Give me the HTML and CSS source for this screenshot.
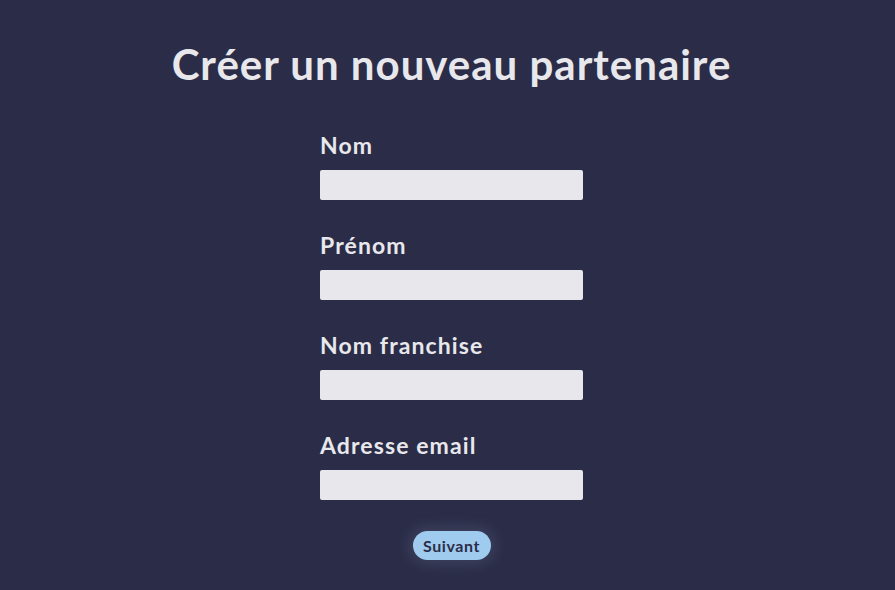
FILE: index.html
```html
<!DOCTYPE html>
<html lang="fr">
<head>
<meta charset="utf-8">
<link rel="stylesheet" href="styles.css">
<title>Créer un nouveau partenaire</title>
</head>
<body>
<main class="page">
  <h1 class="title">Créer un nouveau partenaire</h1>
  <form class="form">
    <label class="field">
      <span class="label">Nom</span>
      <input class="input" type="text">
    </label>
    <label class="field">
      <span class="label">Prénom</span>
      <input class="input" type="text">
    </label>
    <label class="field">
      <span class="label">Nom franchise</span>
      <input class="input" type="text">
    </label>
    <label class="field">
      <span class="label">Adresse email</span>
      <input class="input" type="email">
    </label>
    <div class="actions">
      <button class="btn" type="button">Suivant</button>
    </div>
  </form>
</main>
</body>
</html>
```
FILE: styles.css
```css
html, body {
  margin: 0;
  padding: 0;
  height: 100%;
}
body {
  background: #2b2d48;
  color: #e8e8ec;
  font-family: Lato, "Open Sans", sans-serif;
}
.page {
  display: flex;
  flex-direction: column;
  align-items: center;
  padding-top: 38px;
  padding-left: 8px;
}
.title {
  margin: 0;
  font-size: 42px;
  font-weight: 700;
  line-height: 52px;
  letter-spacing: 1px;
}
.form {
  display: flex;
  flex-direction: column;
  gap: 31px;
  width: 263px;
  margin-top: 41px;
}
.field {
  display: flex;
  flex-direction: column;
  gap: 11px;
}
.label {
  font-size: 23px;
  font-weight: 700;
  line-height: 28px;
  letter-spacing: 1.1px;
}
.input {
  box-sizing: border-box;
  height: 30px;
  width: 263px;
  border: none;
  border-radius: 2px;
  background: #e8e8ec;
  margin: 0;
}
.actions {
  display: flex;
  justify-content: center;
}
.btn {
  height: 29px;
  width: 78px;
  padding: 0;
  border: none;
  border-radius: 15px;
  background: #9ecbee;
  color: #2b2d48;
  font-family: inherit;
  font-size: 16px;
  font-weight: 700;
  letter-spacing: 0.6px;
  box-shadow: 0 0 14px 4px rgba(150, 160, 200, 0.18);
}
```
